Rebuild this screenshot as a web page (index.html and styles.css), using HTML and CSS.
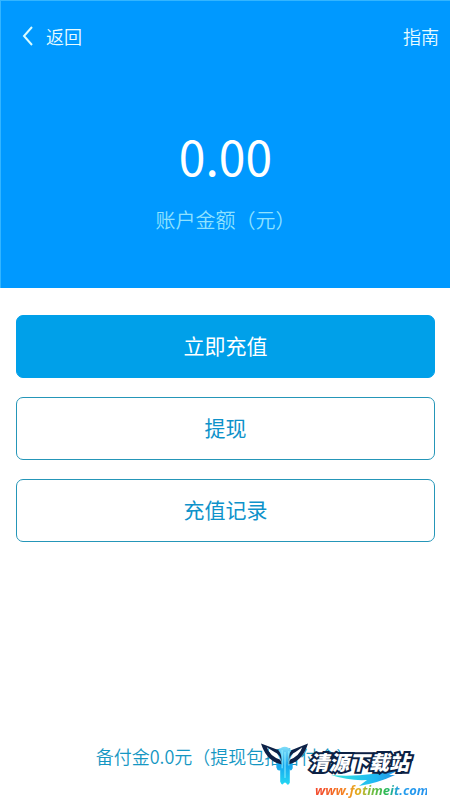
FILE: index.html
```html
<!DOCTYPE html>
<html lang="zh-CN">
<head>
<meta charset="utf-8">
<meta name="viewport" content="width=device-width, initial-scale=1">
<title>账户金额</title>
<link rel="stylesheet" href="styles.css">
</head>
<body>
<header class="hero">
  <nav class="bar">
    <a class="back" href="#"><svg class="chevron" viewBox="0 0 12 20" aria-hidden="true"><path d="M10 1 2 10l8 9"/></svg>返回</a>
    <a class="guide" href="#">指南</a>
  </nav>
  <div class="amount">0.00</div>
  <div class="caption">账户金额（元）</div>
</header>
<main class="actions">
  <button class="btn primary" type="button">立即充值</button>
  <button class="btn" type="button">提现</button>
  <button class="btn" type="button">充值记录</button>
</main>
<footer class="footer">
  <p class="reserve">备付金0.0元（提现包括备付金）</p>
  <div class="mark">
    <svg class="wings" viewBox="0 0 50 46" aria-hidden="true">
      <defs><linearGradient id="drip" x1="0" y1="0" x2="0" y2="1"><stop offset="0" stop-color="#7fdcf8"/><stop offset=".5" stop-color="#16a7ee"/><stop offset="1" stop-color="#25d8f3"/></linearGradient></defs>
      <path fill="url(#drip)" d="M17 9Q25 0 32 9L33 16V27Q31 31 30 28V42Q28 46 26 42H24Q22 46 20 41V29Q17 30 16 26V16Z"/>
      <path fill="#fff" d="M8 6 16 10 21 20 10 15ZM41 6 34 10 29 20 39 15Z"/>
      <path fill="#0d2147" d="M0 1 18 8Q22 13 22 22 20 12 14 10L6 5Q9 14 20 18L22 23Q6 20 0 1ZM49 1 32 8Q28 13 28 22 30 12 36 10L43 5Q40 14 30 18L28 23Q43 20 49 1Z"/>
      <path fill="none" stroke="#93f0ff" d="M22 8V27M25 10V37M29 9V24"/>
    </svg>
    <div class="brand">
      <svg class="swoosh" viewBox="0 0 104 20" aria-hidden="true">
        <defs><linearGradient id="wave"><stop offset="0" stop-color="#35e5d9"/><stop offset=".6" stop-color="#20b9f3"/><stop offset="1" stop-color="#2588dd"/></linearGradient></defs>
        <path fill="url(#wave)" d="M22 9Q54 12 94 2L80 9H86Q69 17 50 20L58 14Q40 15 22 9Z"/>
      </svg>
      <div class="name">清源下载站</div>
      <div class="site">www.fotimeit.com</div>
    </div>
  </div>
</footer>
</body>
</html>
```

FILE: styles.css
```css
* {
  box-sizing: border-box;
}

body {
  display: flex;
  flex-direction: column;
  min-height: 100vh;
  margin: 0;
  background: #fff;
  font-family: "Noto Sans CJK SC", sans-serif;
}

.hero {
  padding: 19px 0 53px;
  border-top: 1px solid #33b5ff;
  border-left: 1px solid #33b5ff;
  background: #0099ff;
  color: #fff;
  text-align: center;
}

.bar {
  display: flex;
  align-items: center;
  justify-content: space-between;
  height: 32px;
  padding: 0 11px 0 21px;
  font-size: 18px;
  font-weight: 350;
}

.bar a {
  color: #e8fcff;
  text-decoration: none;
}

.back {
  display: flex;
  align-items: center;
  gap: 12px;
}

.chevron {
  width: 12px;
  height: 20px;
  fill: none;
  stroke: #d8fcff;
  stroke-width: 2;
}

.amount {
  margin-top: 73px;
  font-size: 48px;
  font-weight: 400;
  line-height: 60px;
}

.caption {
  margin-top: 20px;
  color: #8fe2ff;
  font-size: 20px;
  font-weight: 350;
  line-height: 30px;
}

.actions {
  display: grid;
  gap: 19px;
  padding: 27px 15px 28px 16px;
}

.btn {
  height: 63px;
  padding: 0 0 4px;
  border: 1px solid #2596b8;
  border-radius: 7px;
  background: #fff;
  color: #0e92ca;
  font: 400 21px/30px "Noto Sans CJK SC", sans-serif;
}

.primary {
  border-color: #00a0e9;
  background: #00a0e9;
  color: #fff;
}

.footer {
  position: relative;
  margin-top: auto;
  padding-bottom: 30px;
}

.reserve {
  margin: 0;
  color: #1597c3;
  font-size: 18px;
  font-weight: 350;
  line-height: 28px;
  text-align: center;
}

.mark {
  position: absolute;
  right: 23px;
  bottom: 0;
  display: flex;
  align-items: flex-start;
}

.wings {
  width: 48px;
  height: 45px;
}

.brand {
  position: relative;
  width: 118px;
  height: 58px;
}

.swoosh {
  position: absolute;
  top: 24px;
  left: 0;
  width: 104px;
  height: 20px;
}

.name {
  position: relative;
  color: #fff;
  font: italic 900 20px/40px "Noto Sans CJK SC", sans-serif;
  white-space: nowrap;
  -webkit-text-stroke: 4px #0b2144;
  paint-order: stroke fill;
}

.site {
  position: relative;
  padding-left: 6px;
  background: linear-gradient(90deg, #f34b2b 10%, #f58b22 32%, #e0b020 42%, #77bd3d 53%, #24b957 66%, #229eed 76%, #2794ee);
  background-clip: text;
  color: transparent;
  font: italic 700 13px/16px "Open Sans", sans-serif;
  white-space: nowrap;
}
```
